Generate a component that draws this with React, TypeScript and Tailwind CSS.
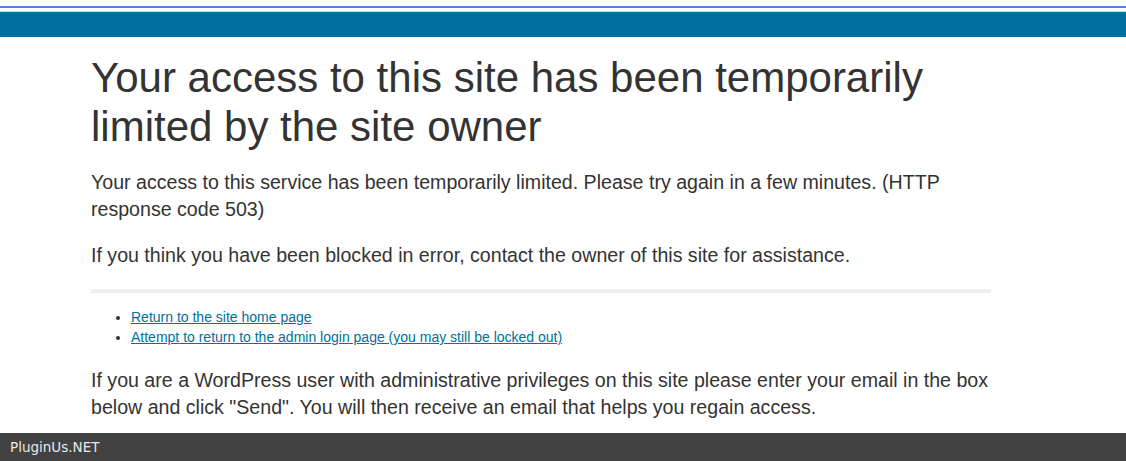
import React from "react";

export default function App() {
  return (
    <div className="relative min-h-[461px] bg-white text-[#333333]" style={{ fontFamily: '"Liberation Sans", Arial, sans-serif' }}>
      <div className="pt-[6px]">
        <div className="h-[2px] bg-[#4285f4]" />
        <div className="h-[3px]" />
        <div className="h-px bg-[#d6d6d6]" />
        <div className="h-[25px] bg-[#00709e]" />
      </div>
      <div className="ml-[91px] w-[900px] pt-[16px]">
        <h1 className="text-[42px] leading-[49px] font-normal">
          Your access to this site has been temporarily limited by the site owner
        </h1>
        <p className="mt-[18px] text-[19.6px] leading-[27px]">
          Your access to this service has been temporarily limited. Please try again in a few minutes. (HTTP response code 503)
        </p>
        <p className="mt-[19px] text-[19.6px] leading-[27px]">
          If you think you have been blocked in error, contact the owner of this site for assistance.
        </p>
        <div className="mt-[20px] h-[4px] bg-[#eeeeee]" />
        <ul className="mt-[14px] list-disc pl-[40px] text-[14px] leading-[20px]">
          <li>
            <a href="#" className="text-[#00709e] underline">Return to the site home page</a>
          </li>
          <li>
            <a href="#" className="text-[#00709e] underline">Attempt to return to the admin login page (you may still be locked out)</a>
          </li>
        </ul>
        <p className="mt-[20px] text-[19.6px] leading-[27px]">
          If you are a WordPress user with administrative privileges on this site please enter your email in the box below and click "Send". You will then receive an email that helps you regain access.
        </p>
      </div>
      <div
        className="fixed bottom-0 left-0 right-0 h-[28px] bg-[#424242] pl-[10px] text-[13.5px] leading-[28px] text-[#e8e8e8]"
        style={{ fontFamily: '"DejaVu Sans", sans-serif' }}
      >
        PluginUs.NET
      </div>
    </div>
  );
}
